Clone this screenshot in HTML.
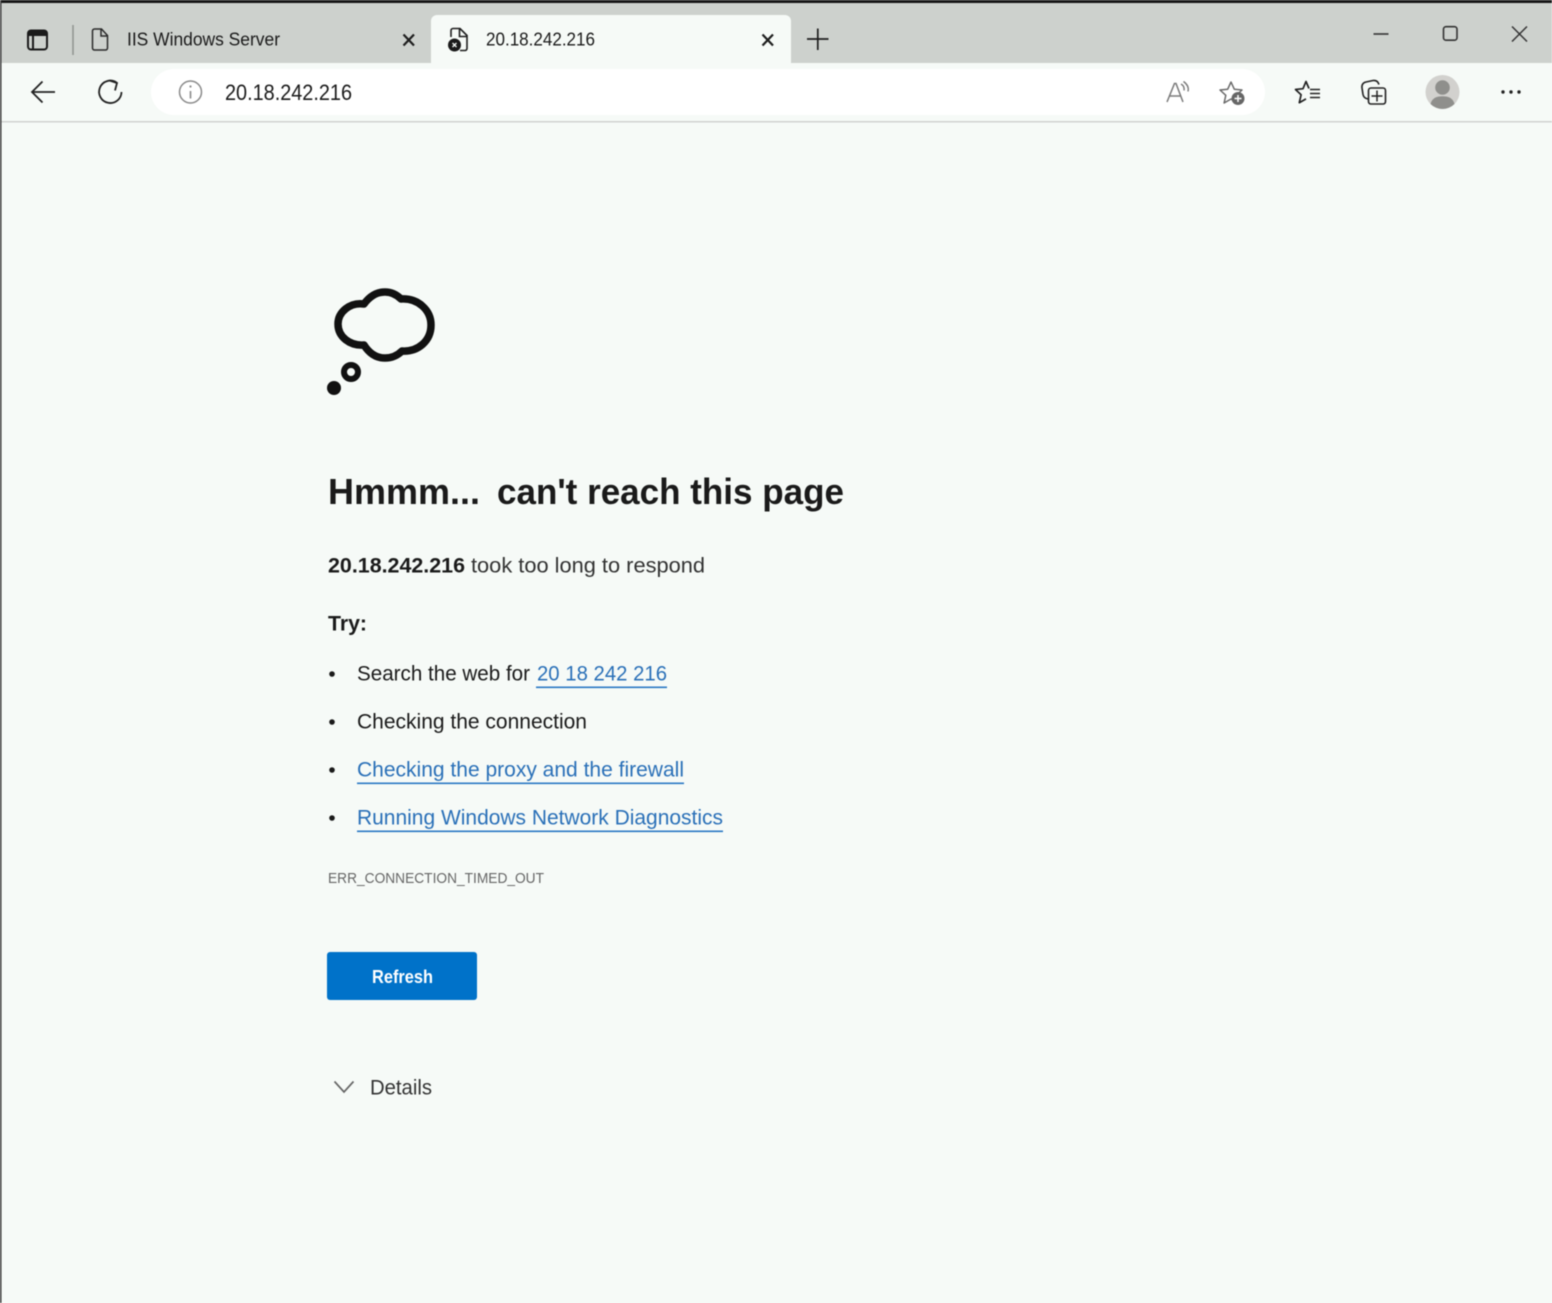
<!DOCTYPE html>
<html lang="en">
<head>
<meta charset="utf-8">
<title>20.18.242.216</title>
<style>
html,body{margin:0;padding:0;width:1552px;height:1303px;overflow:hidden;background:#f6faf7}
svg{display:block;position:absolute;left:0;top:0;filter:blur(.4px)}
text{font-family:"Liberation Sans",sans-serif;fill:#1a1a1a}
.b{font-weight:700}
.l{fill:#2a70b8}
</style>
</head>
<body>
<svg width="1552" height="1303" viewBox="0 0 1552 1303" xmlns="http://www.w3.org/2000/svg">
  <rect width="1552" height="1303" fill="#f6faf7"/>
  <rect y="0" width="1552" height="63" fill="#cdd1cd"/>
  <rect y="0" width="1552" height="3" fill="#161616"/>
  <rect y="121" width="1552" height="1.5" fill="#d0d3d0"/>
  <rect x="0" y="0" width="1.5" height="1303" fill="#3a3a3a"/>

  <!-- active tab -->
  <path d="M431 63V21a6 6 0 0 1 6-6H785a6 6 0 0 1 6 6V63z" fill="#f6faf7"/>

  <!-- tab actions icon -->
  <rect x="28" y="30.500" width="19" height="19" rx="3" fill="none" stroke="#1a1a1a" stroke-width="2"/>
  <rect x="28" y="30.500" width="19" height="5.500" fill="#1a1a1a"/>
  <path d="M33 36v13" stroke="#1a1a1a" stroke-width="2"/>
  <path d="M73 25v30" stroke="#8f928f" stroke-width="1.500"/>

  <!-- inactive tab -->
  <path d="M92.500 31a2 2 0 0 1 2-2h7l6 6.500V48a2 2 0 0 1-2 2h-11a2 2 0 0 1-2-2zM101 29.500V36h6.500" fill="none" stroke="#2a2a2a" stroke-width="1.500"/>
  <text x="127" y="45.500" font-size="18" textLength="153" lengthAdjust="spacingAndGlyphs">IIS Windows Server</text>
  <path d="M403.500 34.500l10.500 11M414 34.500l-10.500 11" stroke="#1e1e1e" stroke-width="2.200" fill="none"/>

  <!-- active tab content -->
  <path d="M451 37v-6.500a2 2 0 0 1 2-2h7l7 7v13a2 2 0 0 1-2 2h-5M459.500 29v7.500h7" fill="none" stroke="#1e1e1e" stroke-width="1.600"/>
  <circle cx="454.500" cy="45" r="6.500" fill="#1a1a1a"/>
  <path d="M452.500 43l4 4M456.500 43l-4 4" stroke="#f6faf7" stroke-width="1.300"/>
  <text x="486" y="45.500" font-size="18" textLength="109" lengthAdjust="spacingAndGlyphs">20.18.242.216</text>
  <path d="M762.500 34.500l10.500 11M773 34.500l-10.500 11" stroke="#1e1e1e" stroke-width="2.200" fill="none"/>
  <path d="M807 39h21.500M817.800 28.500v21.500" stroke="#1e1e1e" stroke-width="1.700" fill="none"/>

  <!-- window controls -->
  <path d="M1373.500 34h15" stroke="#333" stroke-width="1.600"/>
  <rect x="1443.500" y="26.700" width="13.500" height="13.500" rx="2.500" fill="none" stroke="#333" stroke-width="1.600"/>
  <path d="M1512 26.500l15 15M1527 26.500l-15 15" stroke="#333" stroke-width="1.500"/>

  <!-- toolbar -->
  <path d="M32 92h23M42.500 81.500L32 92l10.500 10.500" fill="none" stroke="#222" stroke-width="1.800"/>
  <path d="M116.500 82.500A11.200 11.200 0 1 0 121.500 92" fill="none" stroke="#222" stroke-width="1.800"/>
  <path d="M109.500 80.500l7.500 2.500-2 7.500" fill="none" stroke="#222" stroke-width="1.800"/>
  <rect x="151" y="69" width="1114" height="46" rx="23" fill="#fff"/>
  <circle cx="190.500" cy="92" r="11" fill="none" stroke="#8a8a8a" stroke-width="1.500"/>
  <path d="M190.500 91v7.500" stroke="#8a8a8a" stroke-width="1.600"/>
  <circle cx="190.500" cy="86.500" r="1.100" fill="#8a8a8a"/>
  <text x="225" y="100" font-size="22" textLength="127" lengthAdjust="spacingAndGlyphs">20.18.242.216</text>

  <!-- read aloud -->
  <path d="M1167 102l7.500-18.500h1.500l7 18.500M1169.700 96h11" fill="none" stroke="#7a7a7a" stroke-width="1.500"/>
  <path d="M1181 84c2.500 1.500 3.500 4 3 6.500M1183.500 81.500c3.500 2.500 5.500 6 4.500 10" fill="none" stroke="#7a7a7a" stroke-width="1.400"/>

  <!-- favourite add -->
  <path d="M1231 82l3.300 7.200 7.700.8-5.800 5.300 1.700 7.700-6.900-4-6.900 4 1.700-7.700-5.800-5.300 7.700-.8z" fill="none" stroke="#6a6a6a" stroke-width="1.500" stroke-linejoin="round"/>
  <circle cx="1238" cy="98.500" r="6.500" fill="#666"/>
  <path d="M1234.500 98.500h7M1238 95v7" stroke="#fff" stroke-width="1.500"/>

  <!-- favourites -->
  <path d="M1309 88.500l-3-7-3 7.200-7.500.8 5.600 5.200-1.800 8 6.700-3.800" fill="none" stroke="#222" stroke-width="1.700" stroke-linejoin="round"/>
  <path d="M1310 89.500h10M1310 93.500h10M1310 97.500h10" stroke="#222" stroke-width="1.500"/>

  <!-- collections -->
  <path d="M1368 99c-3-.5-4.500-2-5-4.500l-1-6.500c-.5-3 1-5.500 4-6l7-1.500c2.500-.3 5 .8 6 4" fill="none" stroke="#222" stroke-width="1.600"/>
  <rect x="1368.500" y="88" width="17" height="16" rx="2.500" fill="#f6faf7" stroke="#222" stroke-width="1.600"/>
  <path d="M1377 90.500v11M1371.500 96h11" stroke="#222" stroke-width="1.500"/>

  <!-- avatar -->
  <circle cx="1442.500" cy="92" r="17" fill="#d2d1ce"/>
  <circle cx="1442.500" cy="87.500" r="7.300" fill="#8f8f8c"/>
  <path d="M1430.500 104c1.500-6 6-7.800 12-7.800s10.500 1.800 12 7.800a17 17 0 0 1-24 0z" fill="#8f8f8c"/>

  <!-- more -->
  <circle cx="1503" cy="92" r="1.700" fill="#222"/>
  <circle cx="1511" cy="92" r="1.700" fill="#222"/>
  <circle cx="1519" cy="92" r="1.700" fill="#222"/>

  <!-- cloud -->
  <path d="M364 304C370 296 377 292 385 292C392 292 397 295 401 299C418 298 431 310 431 325C431 341 418 352 402 351C397 356 391 358 385 358C376 358 369 353 364 345C350 346 338 337 338 324C338 312 350 302 364 304Z" fill="none" stroke="#111" stroke-width="7.500" stroke-linejoin="round"/>
  <circle cx="351" cy="372" r="7" fill="none" stroke="#111" stroke-width="6"/>
  <circle cx="334" cy="388" r="7" fill="#111"/>

  <!-- content -->
  <text class="b" x="328" y="504" font-size="36" textLength="152" lengthAdjust="spacingAndGlyphs">Hmmm...</text>
  <text class="b" x="497" y="504" font-size="36" textLength="347" lengthAdjust="spacingAndGlyphs">can't reach this page</text>
  <text class="b" x="328" y="572.500" font-size="21" textLength="137" lengthAdjust="spacingAndGlyphs">20.18.242.216</text>
  <text x="471" y="572.500" font-size="21" textLength="234" lengthAdjust="spacingAndGlyphs" style="fill:#333">took too long to respond</text>
  <text class="b" x="328" y="630.500" font-size="21" textLength="39" lengthAdjust="spacingAndGlyphs">Try:</text>

  <circle cx="332" cy="674" r="2.800" fill="#1a1a1a"/>
  <circle cx="332" cy="722" r="2.800" fill="#1a1a1a"/>
  <circle cx="332" cy="770" r="2.800" fill="#1a1a1a"/>
  <circle cx="332" cy="818" r="2.800" fill="#1a1a1a"/>

  <text x="357" y="680.500" font-size="21" textLength="173" lengthAdjust="spacingAndGlyphs">Search the web for</text>
  <text class="l" x="537" y="680.500" font-size="21" textLength="130" lengthAdjust="spacingAndGlyphs">20 18 242 216</text>
  <rect x="536" y="686.500" width="131" height="1.600" fill="#2a78c4"/>
  <text x="357" y="728.500" font-size="21" textLength="230" lengthAdjust="spacingAndGlyphs">Checking the connection</text>
  <text class="l" x="357" y="776.500" font-size="21" textLength="327" lengthAdjust="spacingAndGlyphs">Checking the proxy and the firewall</text>
  <rect x="357" y="782.500" width="327" height="1.600" fill="#2a78c4"/>
  <text class="l" x="357" y="824.500" font-size="21" textLength="366" lengthAdjust="spacingAndGlyphs">Running Windows Network Diagnostics</text>
  <rect x="357" y="830.500" width="366" height="1.600" fill="#2a78c4"/>

  <text x="328" y="883" font-size="15" textLength="216" lengthAdjust="spacingAndGlyphs" style="fill:#666">ERR_CONNECTION_TIMED_OUT</text>

  <rect x="327" y="952" width="150" height="48" rx="3" fill="#0072c9"/>
  <text class="b" x="372" y="983" font-size="18" textLength="61" lengthAdjust="spacingAndGlyphs" style="fill:#fff">Refresh</text>

  <path d="M334.500 1081.500l9.500 10.500 9.500-10.500" fill="none" stroke="#666" stroke-width="1.700"/>
  <text x="370" y="1094.500" font-size="21" textLength="62" lengthAdjust="spacingAndGlyphs" style="fill:#333">Details</text>
</svg>
</body>
</html>
